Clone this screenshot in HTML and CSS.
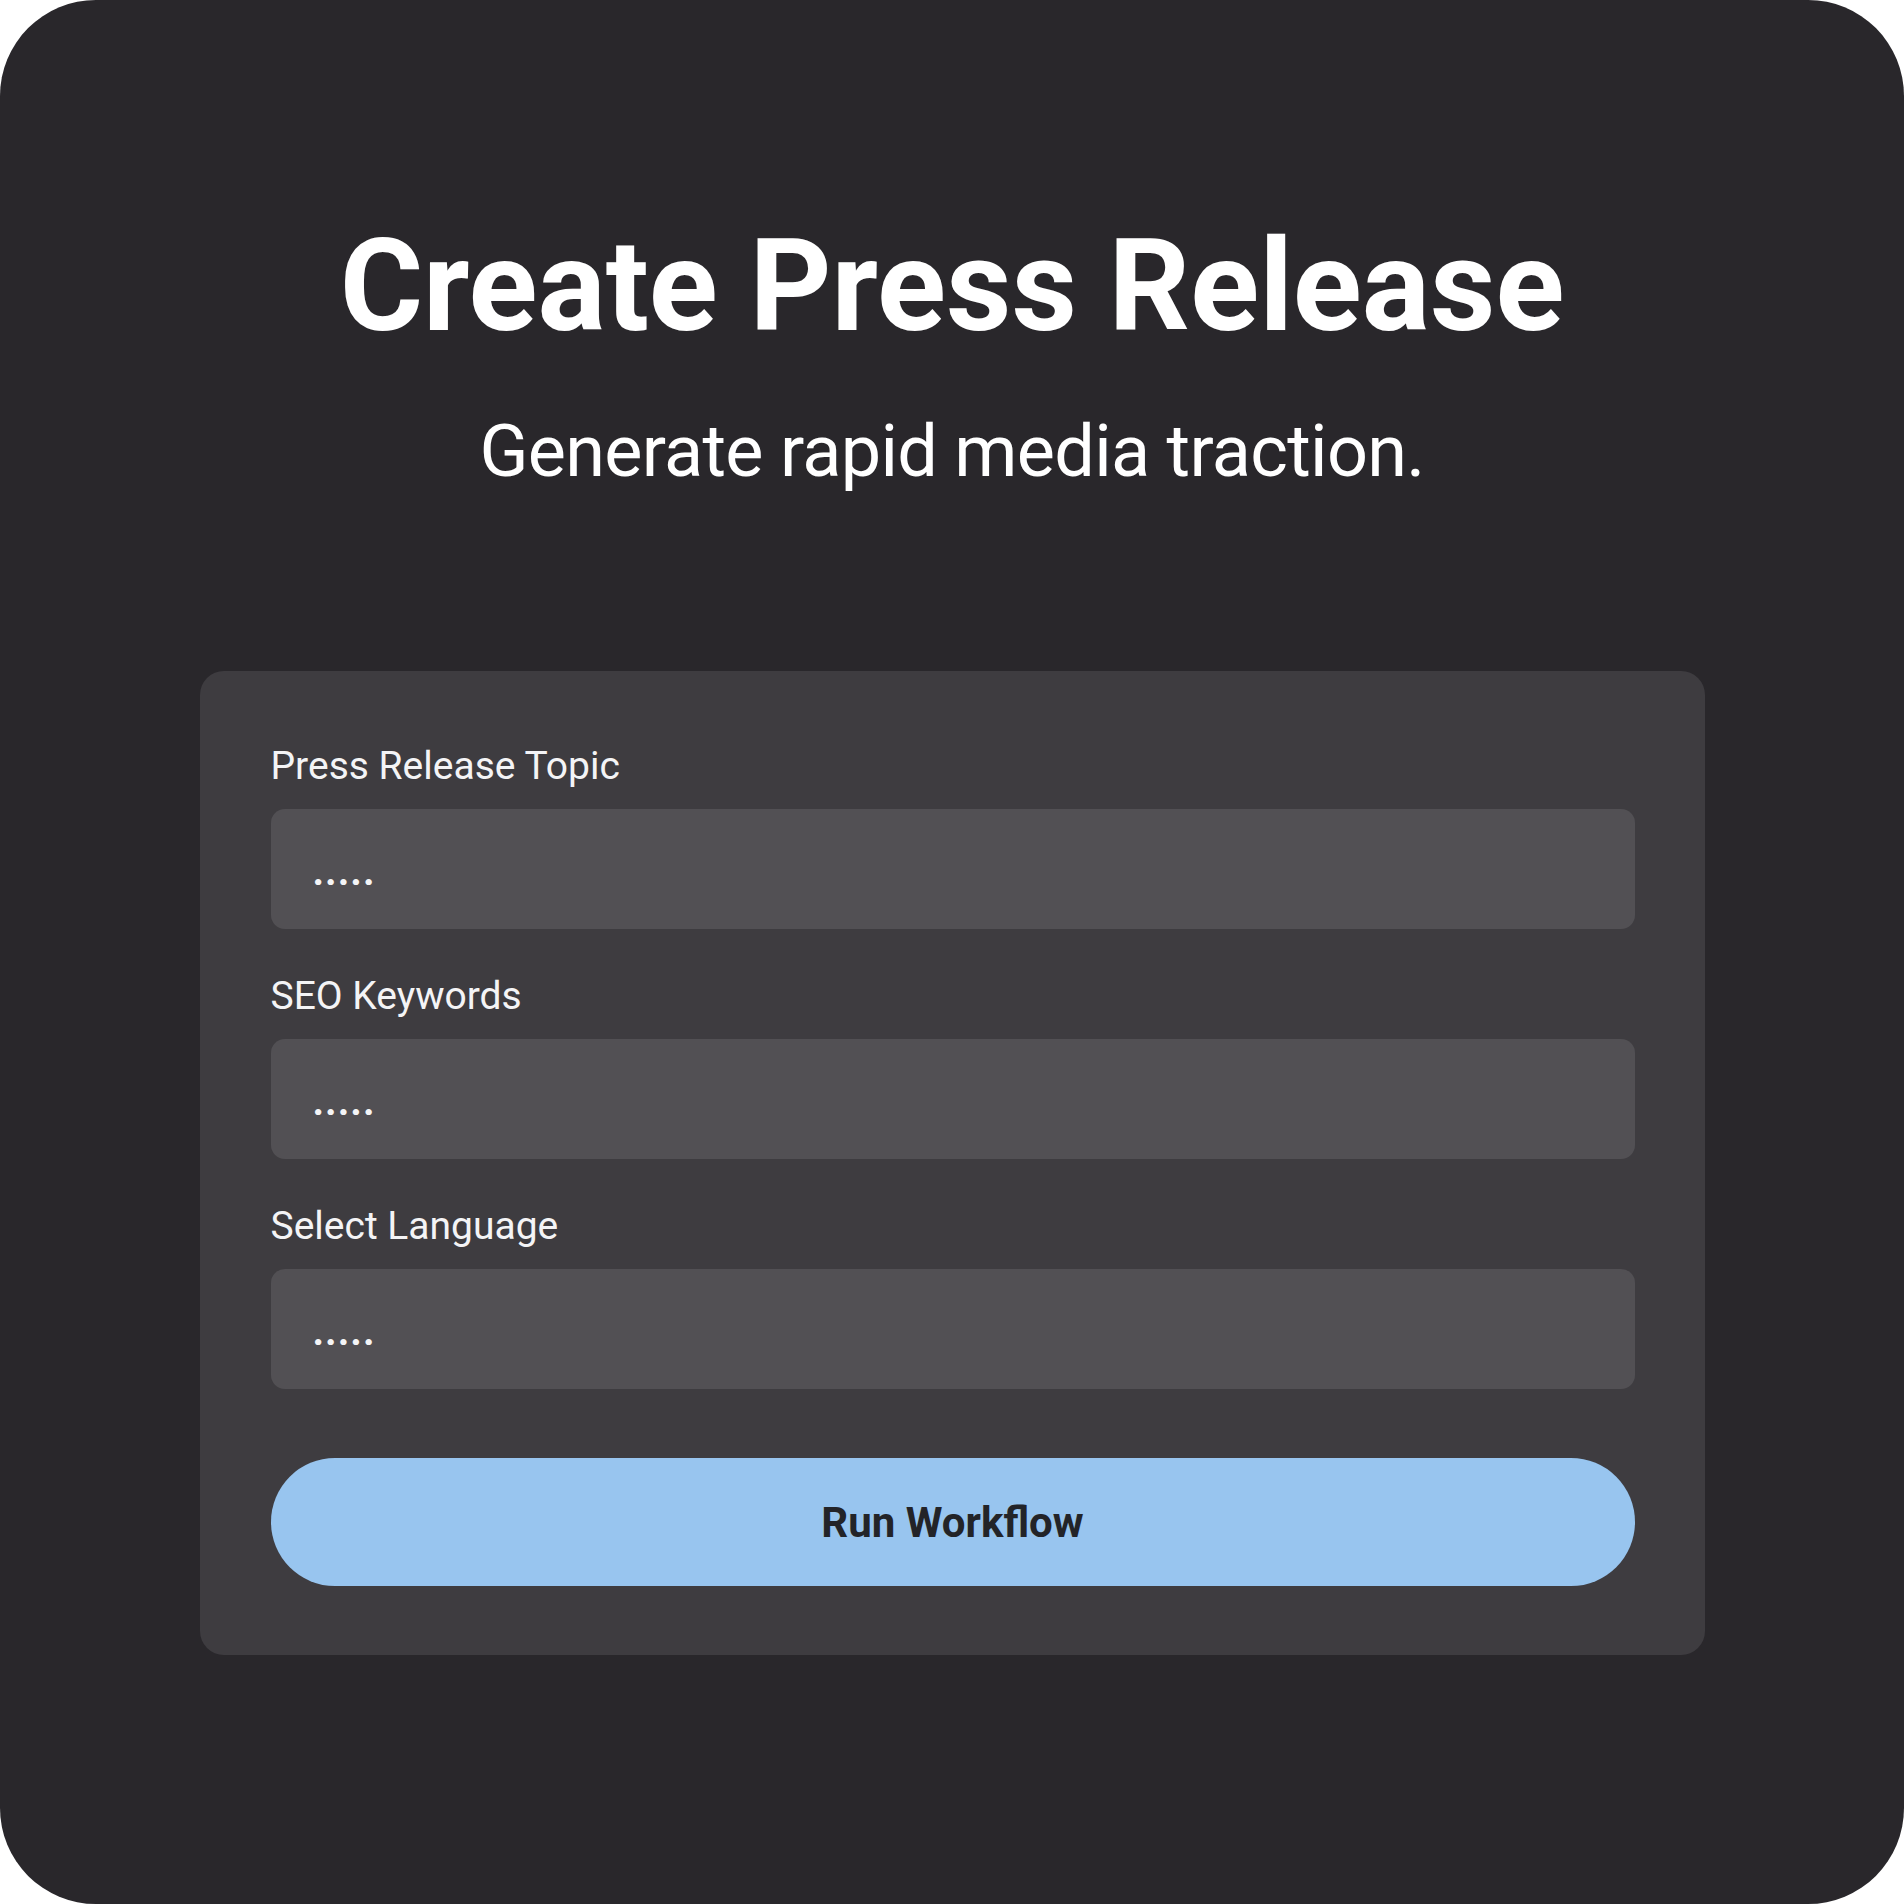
FILE: index.html
```html
<!DOCTYPE html>
<html lang="en">
<head>
    <meta charset="UTF-8">
    <meta name="viewport" content="width=device-width, initial-scale=1.0">
    <title>Create Press Release</title>
    <link rel="stylesheet" href="styles.css">
</head>
<body>

    <div class="screen">
        <h1>Create Press Release</h1>
        <p class="subtitle">Generate rapid media traction.</p>

        <form class="card" onsubmit="return false">
            <label for="topic">Press Release Topic</label>
            <input type="text" id="topic" placeholder=".....">

            <label for="keywords">SEO Keywords</label>
            <input type="text" id="keywords" placeholder=".....">

            <label for="language">Select Language</label>
            <input type="text" id="language" placeholder=".....">

            <button type="submit">Run Workflow</button>
        </form>
    </div>

</body>
</html>
```

FILE: styles.css
```css
body {
    margin: 0;
    background: #fff;
    font-family: Roboto, "Liberation Sans", sans-serif;
}
.screen {
    width: 1904px;
    height: 1904px;
    box-sizing: border-box;
    background: #29272b;
    border-radius: 96px;
    display: flex;
    flex-direction: column;
    align-items: center;
    padding-top: 210px;
}
h1 {
    margin: 0;
    font-size: 127.5px;
    line-height: 1.2;
    font-weight: 700;
    color: #fff;
}
.subtitle {
    margin: 46px 0 0;
    font-size: 72px;
    line-height: 1.2;
    font-weight: 400;
    letter-spacing: -0.7px;
    color: #fff;
}
.card {
    margin-top: 176px;
    width: 1505px;
    box-sizing: border-box;
    padding: 71px 70px 69px 71px;
    background: #3e3c40;
    border-radius: 24px;
    display: flex;
    flex-direction: column;
}
.card label {
    font-size: 39px;
    line-height: 48px;
    color: #f4f4f6;
    margin-top: 43px;
}
.card label:first-child {
    margin-top: 0;
}
.card input {
    margin-top: 19px;
    height: 120px;
    box-sizing: border-box;
    padding: 5px 42px 0;
    border: none;
    border-radius: 14px;
    background: #525054;
    color: #fff;
    font-family: inherit;
    font-size: 40px;
    font-weight: 700;
    outline: none;
}
.card input::placeholder {
    color: #f4f4f6;
    letter-spacing: 1px;
}
.card button {
    margin-top: 69px;
    height: 128px;
    border: none;
    border-radius: 64px;
    background: #98c5ef;
    color: #232428;
    font-family: inherit;
    font-size: 42px;
    font-weight: 700;
    cursor: pointer;
}
```
